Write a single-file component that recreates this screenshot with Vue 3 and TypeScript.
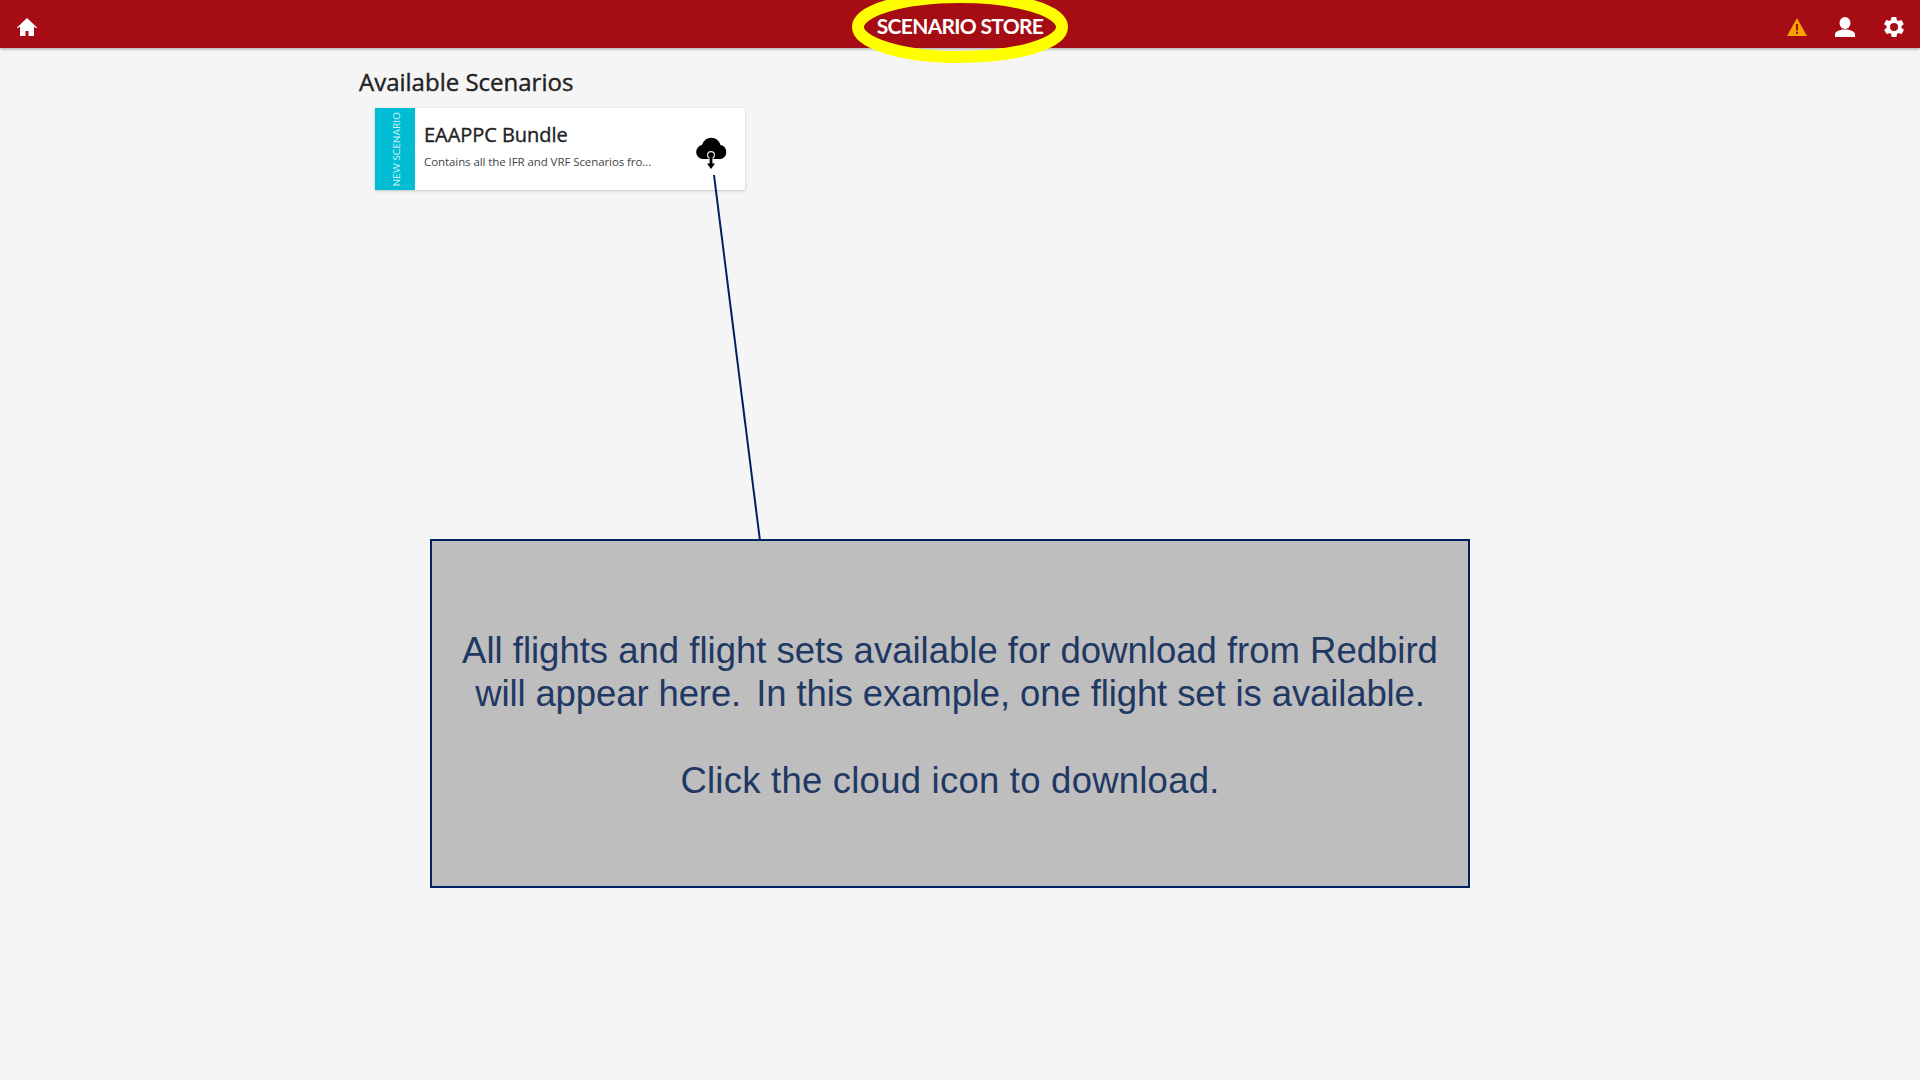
<template>
  <div class="page">
    <header class="topbar">
      <svg viewBox="0 0 20 18" width="20" height="18">
        <path d="M10 0 0 9.500l.8.8L3 8.500V18h5.500v-5h3v5H17V8.500l2.200 1.800.8-.8z" fill="#fff" />
      </svg>
      <div class="title">SCENARIO STORE</div>
      <div class="actions">
        <svg viewBox="0 0 20 18" width="20" height="18">
          <path d="M10 0 20 18H0z" fill="#f5a300" />
          <rect x="9" y="6" width="2" height="6.500" fill="#a50c14" />
          <rect x="9" y="13.800" width="2" height="2" fill="#a50c14" />
        </svg>
        <svg viewBox="0 0 20 20" width="20" height="20">
          <ellipse cx="10" cy="6" rx="5.500" ry="6" fill="#fff" />
          <path d="M0 20v-3c0-2.500 4-3.500 7-4.500h6c3 1 7 2 7 4.500v3z" fill="#fff" />
        </svg>
        <svg viewBox="0 0 24 24" width="24" height="24">
          <path fill="#fff" fill-rule="evenodd" d="M19.400 13c.1-.3.100-.7.100-1s0-.7-.1-1l2.100-1.600c.2-.1.200-.4.100-.6l-2-3.500c-.1-.2-.4-.3-.6-.2l-2.500 1c-.5-.4-1.100-.7-1.700-1l-.4-2.600c0-.3-.2-.5-.5-.5h-4c-.3 0-.5.200-.5.400l-.4 2.700c-.6.200-1.200.6-1.700 1l-2.500-1c-.2-.1-.5 0-.6.200l-2 3.500c-.1.200-.1.500.1.600L4.600 11c-.1.300-.1.700-.1 1s0 .7.100 1l-2.100 1.600c-.2.100-.2.400-.1.600l2 3.500c.1.200.4.300.6.200l2.500-1c.5.400 1.100.7 1.700 1l.4 2.600c0 .3.200.5.500.5h4c.3 0 .5-.2.500-.4l.4-2.700c.6-.2 1.200-.6 1.700-1l2.500 1c.2.100.5 0 .6-.2l2-3.500c.1-.2.100-.5-.1-.6zM12 16a4 4 0 1 1 0-8 4 4 0 0 1 0 8z" />
        </svg>
      </div>
    </header>

    <main class="content">
      <h2 class="heading">Available Scenarios</h2>
      <div class="card">
        <div class="ribbon"><span>NEW SCENARIO</span></div>
        <div class="card-body">
          <div class="card-title">EAAPPC Bundle</div>
          <div class="card-desc">Contains all the IFR and VRF Scenarios fro...</div>
        </div>
        <svg class="cloud" viewBox="0 0 34 34" width="34" height="34">
          <path d="M8 23a7 7 0 0 1-1-13.900A9.500 9.500 0 0 1 25.500 9 7.200 7.200 0 0 1 26 23z" fill="#000" />
          <circle cx="16" cy="19" r="3.400" fill="none" stroke="#e8e8e8" stroke-width="1.200" />
          <path d="M14.600 18h2.800v9.500H20L16 33l-4-5.500h2.600z" fill="#000" />
        </svg>
      </div>
    </main>

    <aside class="callout">
      <p>All flights and flight sets available for download from Redbird</p>
      <p class="line-b">will appear here.<span class="gap">&nbsp;</span> In this example, one flight set is available.</p>
      <p class="line-c">Click the cloud icon to download.</p>
    </aside>

    <svg class="marks" viewBox="0 0 1920 1080" width="1920" height="1080">
      <ellipse cx="960" cy="27" rx="102" ry="30" fill="none" stroke="#ffff00" stroke-width="12" />
      <line x1="714" y1="175" x2="760" y2="541" stroke="#002060" stroke-width="2" />
    </svg>
  </div>
</template>

<script setup lang="ts">
</script>

<style>
html, body { margin: 0; background: #f5f5f5; }
</style>

<style scoped>
.page { position: relative; width: 1920px; height: 1080px; overflow: hidden; background: #f5f5f5; font-family: "Open Sans", sans-serif; }

.topbar {
  position: relative;
  height: 48px;
  box-sizing: border-box;
  background: #a50c14;
  box-shadow: 0 1px 3px rgba(0,0,0,0.35);
  display: flex;
  align-items: center;
  justify-content: space-between;
  padding: 6px 14px 0 17px;
}
.title {
  position: absolute; left: 0; right: 0; top: 11px;
  text-align: center;
  font: 700 21px/30px Lato, sans-serif;
  letter-spacing: -0.7px;
  color: #fff;
}
.actions { display: flex; align-items: center; gap: 28px; }
.actions svg:last-child { margin-left: -1px; }

.content { padding: 18px 0 0 359px; }
.heading { margin: 0; font-size: 24px; font-weight: 400; line-height: 32px; color: #222; -webkit-text-stroke: 0.4px #222; }

.card {
  display: flex;
  align-items: stretch;
  width: 370px;
  height: 82px;
  margin: 10px 0 0 16px;
  background: #fff;
  border-radius: 2px;
  box-shadow: 0 1px 3px rgba(0,0,0,0.2);
}
.ribbon {
  width: 40px;
  background: #00bcd4;
  display: flex;
  align-items: center;
  justify-content: center;
  padding-left: 3px;
  box-sizing: border-box;
}
.ribbon span {
  writing-mode: vertical-rl;
  transform: rotate(180deg);
  font: 400 9.500px Lato, sans-serif;
  letter-spacing: 0.2px;
  color: #c8eff5;
  white-space: nowrap;
}
.card-body { flex: 1; padding: 14px 0 0 9px; }
.card-title { font-size: 20px; line-height: 26px; color: #222; letter-spacing: -0.05px; -webkit-text-stroke: 0.35px #222; }
.card-desc { margin-top: 6px; font-size: 11.500px; line-height: 16px; color: #444; letter-spacing: -0.08px; }
.cloud { margin: 28px 16px 0 0; }

.marks { position: absolute; left: 0; top: 0; pointer-events: none; }

.callout {
  position: absolute;
  left: 430px;
  top: 539px;
  width: 1040px;
  height: 349px;
  box-sizing: border-box;
  border: 2px solid #002060;
  background: #bebebe;
  padding: 88px 0 0;
  text-align: center;
  font: 400 36.500px/43px "Liberation Sans", Arial, sans-serif;
  color: #1f3864;
}
.callout p { margin: 0; white-space: nowrap; }
.line-b { letter-spacing: -0.11px; }
.gap { margin-right: -5px; }
.callout .line-c { margin-top: 44px; letter-spacing: 0.23px; }
</style>
